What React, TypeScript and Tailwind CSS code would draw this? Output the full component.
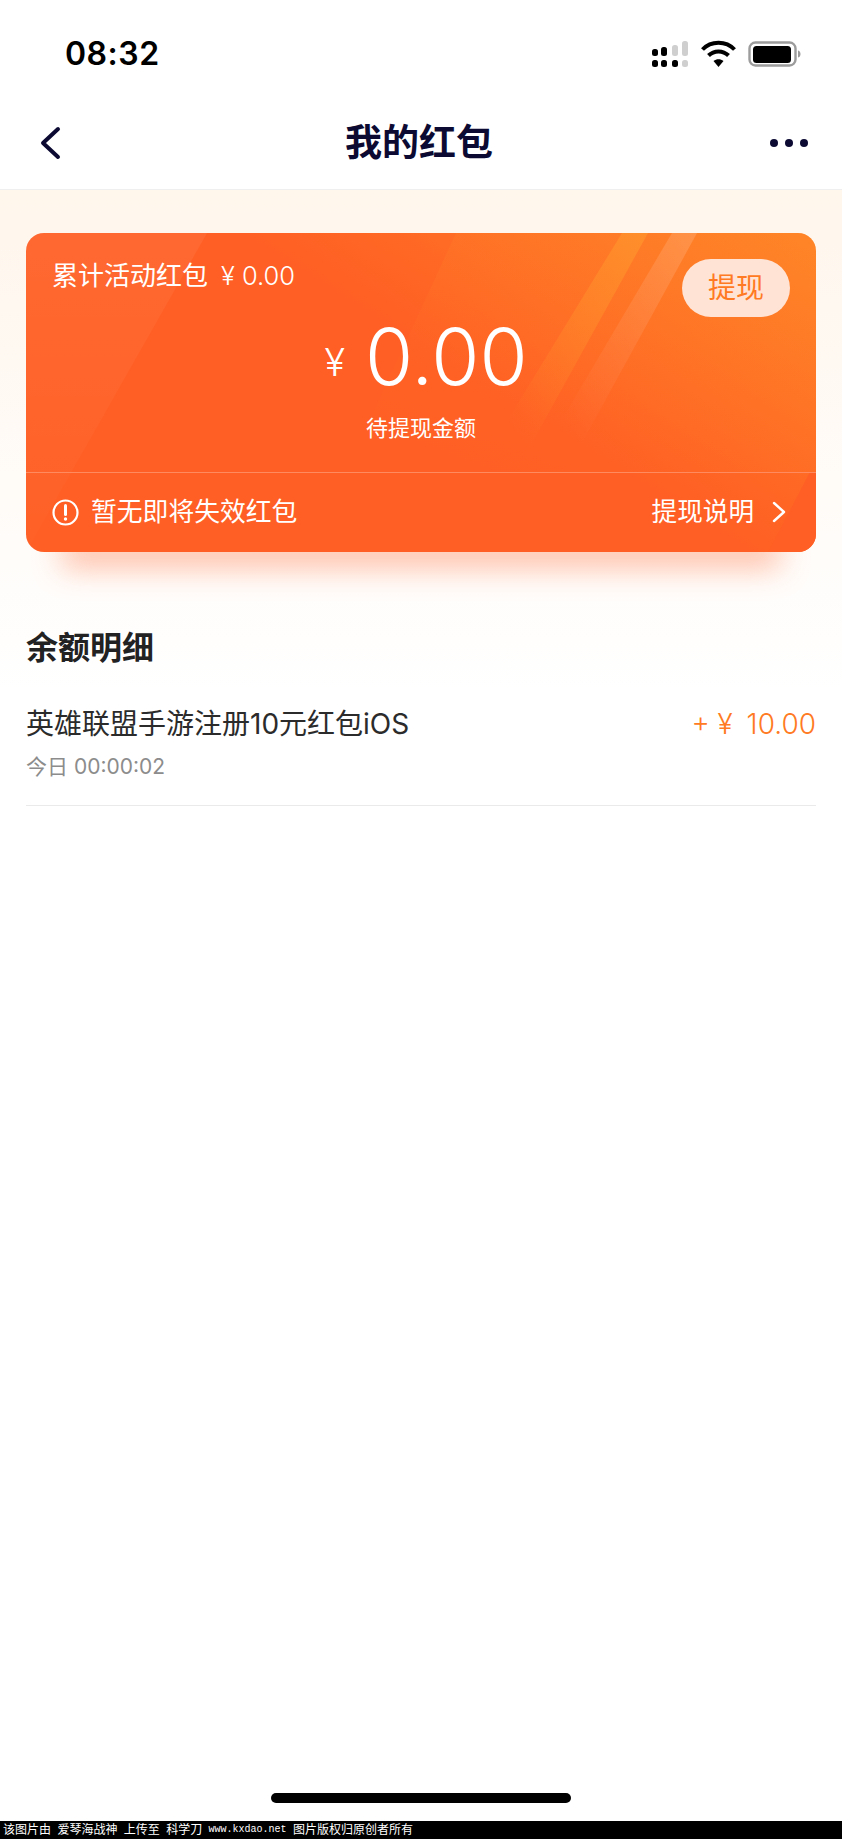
import React from "react";

const cjk = "font-['Inter','Noto_Sans_CJK_SC',sans-serif]";

function StatusIcons() {
  return (
    <svg width="150" height="30" viewBox="0 0 150 30" className="block">
      <g fill="#000">
        <rect x="1" y="10" width="6" height="7" rx="2.5" />
        <rect x="10" y="8" width="6" height="9" rx="2.5" />
        <rect x="1" y="21" width="6" height="7" rx="2.5" />
        <rect x="10" y="21" width="6" height="7" rx="2.5" />
        <rect x="21" y="21" width="6" height="7" rx="2.5" />
      </g>
      <g fill="#cfcfcf">
        <rect x="21" y="6" width="6" height="11" rx="2.5" />
        <rect x="31" y="2" width="6" height="15" rx="2.5" />
        <rect x="31" y="21" width="6" height="7" rx="2.5" />
      </g>
      <g fill="none" stroke="#000" strokeWidth="4">
        <path d="M51.5 10.5 C60 1.5 75 1.5 83.5 10.5" />
        <path d="M57.5 16.5 C63 11 72 11 77.5 16.5" />
      </g>
      <path d="M62.5 22 C65.5 19.6 69.5 19.6 72.5 22 L67.5 28 Z" fill="#000" />
      <rect x="98.5" y="3.5" width="46" height="23" rx="6" fill="none" stroke="#9c9c9c" strokeWidth="2.4" />
      <rect x="102" y="7" width="38" height="17" rx="3.5" fill="#000" />
      <path d="M147 11.5 C149 12 149.5 13.5 149.5 15 C149.5 16.5 149 18 147 18.5 Z" fill="#9c9c9c" />
    </svg>
  );
}

function CardArt() {
  return (
    <svg className="absolute inset-0 h-full w-full" viewBox="0 0 790 319" preserveAspectRatio="none" aria-hidden="true">
      <defs>
        <linearGradient id="a" x1="0" y1="0" x2="0" y2="1">
          <stop offset="0" stopColor="#fff" stopOpacity="0.06" />
          <stop offset="1" stopColor="#fff" stopOpacity="0.01" />
        </linearGradient>
        <linearGradient id="b" x1="0.75" y1="0" x2="0.1" y2="0.85">
          <stop offset="0" stopColor="#ff8a2c" stopOpacity="0.3" />
          <stop offset="0.7" stopColor="#ff8a2c" stopOpacity="0.06" />
          <stop offset="1" stopColor="#ff8a2c" stopOpacity="0" />
        </linearGradient>
        <linearGradient id="c" x1="1" y1="0" x2="0" y2="1">
          <stop offset="0" stopColor="#ff962c" stopOpacity="0.7" />
          <stop offset="0.8" stopColor="#ff962c" stopOpacity="0" />
        </linearGradient>
        <linearGradient id="d" x1="1" y1="0" x2="0" y2="1">
          <stop offset="0" stopColor="#fff" stopOpacity="0.15" />
          <stop offset="0.8" stopColor="#fff" stopOpacity="0" />
        </linearGradient>
      </defs>
      <polygon points="0,0 181,0 0,319" fill="url(#a)" />
      <polygon points="430,0 790,0 790,239 320,239" fill="url(#b)" />
      <polygon points="596,0 622,0 490,239 450,239" fill="url(#c)" />
      <polygon points="646,0 671,0 540,239 505,239" fill="url(#d)" />
      <polygon points="784,239 790,239 790,319 742,319" fill="#ff5f24" />
    </svg>
  );
}

export default function App() {
  return (
    <div className={`flex h-[1839px] w-[842px] flex-col overflow-hidden bg-white ${cjk}`}>
      <header className="flex h-[92px] items-center justify-between pl-[65px] pr-[41px] pt-[15px]">
        <span className="text-[32px] font-semibold leading-none tracking-[0.5px] text-black">08:32</span>
        <StatusIcons />
      </header>

      <nav className="flex h-[98px] items-center justify-between border-b border-[#efefef] pl-[38px] pr-[34px] pt-[4px]">
        <svg width="24" height="34" viewBox="0 0 24 34" fill="none" stroke="#0c0a33" strokeWidth="4" strokeLinecap="round" strokeLinejoin="round">
          <path d="M20 3 L5 17 L20 31" />
        </svg>
        <h1 className="pl-[6px] text-[37px] font-semibold leading-none text-[#0c0a33]">我的红包</h1>
        <div className="flex w-[38px] justify-between">
          <span className="h-[8px] w-[8px] rounded-full bg-[#0c0a33]" />
          <span className="h-[8px] w-[8px] rounded-full bg-[#0c0a33]" />
          <span className="h-[8px] w-[8px] rounded-full bg-[#0c0a33]" />
        </div>
      </nav>

      <main className="flex flex-1 flex-col bg-[linear-gradient(180deg,#fff6ec_0px,#fffdfb_400px,#ffffff_500px)] px-[26px] pt-[43px]">
        <section className="relative flex h-[319px] flex-col overflow-hidden rounded-[18px] bg-[linear-gradient(32deg,#ff5f24_0%,#ff5f24_56%,#ff8225_100%)] text-white">
          <CardArt />
          <div className="relative flex h-[239px] flex-col">
            <div className="flex items-start justify-between pl-[26px] pr-[26px] pt-[26px]">
              <span className="flex items-center pt-[1px] text-[26px] leading-[32px]">累计活动红包<span className="ml-[13px] text-[25.5px] font-light">¥ 0.00</span></span>
              <button className="flex h-[58px] w-[108px] items-center justify-center rounded-[29px] bg-[#ffe3d5] text-[28px] text-[#ff7a22]">提现</button>
            </div>
            <div className="mt-[-7px] flex items-center justify-center pl-[10px]">
              <span className="mr-[20px] mt-[10px] text-[38px] font-light leading-none">¥</span>
              <span className="text-[78px] font-light leading-[94px]">0.00</span>
            </div>
            <div className="mt-[10px] text-center text-[22px] leading-[28px]">待提现金额</div>
          </div>
          <div className="relative flex flex-1 items-center justify-between border-t border-[#ff8a5f] pl-[26px] pr-[30px]">
            <div className="flex items-center gap-[12px] text-[25.8px]">
              <svg width="27" height="27" viewBox="0 0 27 27" fill="none" stroke="#fff" strokeWidth="2.2">
                <circle cx="13.5" cy="13.5" r="12" />
                <path d="M13.5 6.5 V15.5" strokeWidth="3" strokeLinecap="round" />
                <circle cx="13.5" cy="20" r="1.7" fill="#fff" stroke="none" />
              </svg>
              <span>暂无即将失效红包</span>
            </div>
            <div className="flex items-center text-[25.6px]">
              <span>提现说明</span>
              <svg className="ml-[18px]" width="14" height="22" viewBox="0 0 14 22" fill="none" stroke="#fff" strokeWidth="2.4" strokeLinecap="round" strokeLinejoin="round">
                <path d="M2 2 L12 11 L2 20" />
              </svg>
            </div>
          </div>
        </section>
        <div className="mx-[52px] h-0 shadow-[0_0_30px_16px_rgba(255,95,36,0.38)]" />

        <h2 className="mt-[76px] text-[32px] font-bold leading-[40px] text-[#222222]">余额明细</h2>

        <div className="flex flex-col border-b border-[#eaeaea] pb-[23px] pt-[36px]">
          <div className="flex items-center justify-between">
            <span className="text-[28px] leading-[40px] text-[#2b2b2b]">英雄联盟手游注册10元红包iOS</span>
            <span className="text-[28px] font-light leading-[40px] text-[#ff7a22]">+ ¥ <span className="ml-[6px]">10.00</span></span>
          </div>
          <span className="mt-[8px] text-[21px] leading-[30px] text-[#8c8c8c]">今日 00:00:02</span>
        </div>

        <div className="mb-[18px] mt-auto h-[10px] w-[300px] self-center rounded-full bg-black" />
      </main>

      <footer className="flex h-[18px] items-center whitespace-pre bg-black pl-[3px] text-[12px] leading-none text-white [word-spacing:3px]">
        该图片由 爱琴海战神 上传至 科学刀 <span className="font-['Liberation_Mono',monospace] text-[10px]">www.kxdao.net</span> 图片版权归原创者所有
      </footer>
    </div>
  );
}
